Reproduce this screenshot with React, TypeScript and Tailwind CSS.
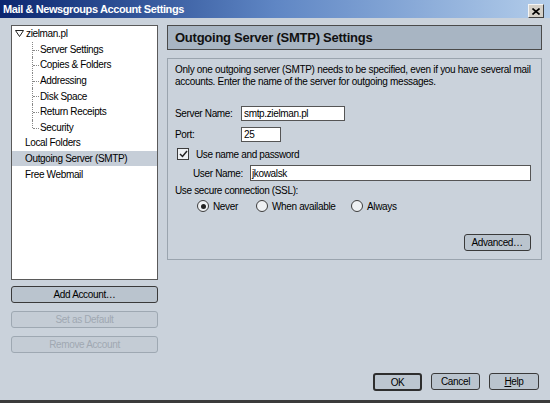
import React from 'react';

const font = { fontFamily: '"Liberation Sans", Arial, sans-serif' };

function TreeItem({ label, indent, selected, last }: { label: string; indent: 'child' | 'root'; selected?: boolean; last?: boolean }) {
  return (
    <div className={`relative h-[15.6px] flex items-center ${selected ? 'bg-[#c6ced8]' : ''}`}>
      {indent === 'child' ? (
        <>
          <span className={`absolute left-[20px] top-0 w-px border-l border-dotted border-[#888] ${last ? 'h-[8px]' : 'h-full'}`} />
          <span className="absolute left-[21px] top-[8px] w-[6px] border-t border-dotted border-[#888]" />
          <span className="pl-[28px]">{label}</span>
        </>
      ) : (
        <span className="pl-[13px]">{label}</span>
      )}
    </div>
  );
}

function Btn({ children, disabled, isDefault, className = '' }: { children: React.ReactNode; disabled?: boolean; isDefault?: boolean; className?: string }) {
  return (
    <div
      className={`h-[17px] flex items-center justify-center rounded-[3px] text-[10px] ${
        disabled
          ? 'border border-[#9ea8b2] bg-[#c4ccd5] text-[#a0a8b2]'
          : isDefault
          ? 'border-2 border-[#2e2e2e] bg-[#bcc6d0] text-black'
          : 'border border-[#3a3a3a] bg-[#bac4ce] text-black'
      } ${className}`}
    >
      {children}
    </div>
  );
}

function Radio({ label, checked }: { label: string; checked?: boolean }) {
  return (
    <div className="flex items-center gap-[4px]">
      <span className="w-[12px] h-[12px] rounded-full border border-[#3c3c3c] bg-[#eef1f4] flex items-center justify-center">
        {checked && <span className="w-[5px] h-[5px] rounded-full bg-[#222]" />}
      </span>
      <span>{label}</span>
    </div>
  );
}

export default function App() {
  return (
    <div className="w-[550px] h-[403px] flex flex-col bg-[#cad2db] text-[10px] tracking-[-0.35px] text-black border-b-[3px] border-[#3b3b3b] overflow-hidden" style={font}>
      {/* Title bar */}
      <div className="h-[18px] shrink-0 flex items-center justify-between pl-[3px] pr-[6px] bg-gradient-to-r from-[#0c2670] via-[#5f86c4] to-[#b3cdea]">
        <span className="text-white font-bold text-[11px] tracking-[-0.4px]">Mail &amp; Newsgroups Account Settings</span>
        <span className="w-[16px] h-[14px] mt-[4px] bg-[#d4d0c8] border border-[#f4f4f4] border-r-[#404040] border-b-[#404040] flex items-center justify-center">
          <svg width="8" height="7" viewBox="0 0 8 7">
            <path d="M0.5 0.5 L7.5 6.5 M7.5 0.5 L0.5 6.5" stroke="#000" strokeWidth="1.6" />
          </svg>
        </span>
      </div>

      <div className="flex-1 flex flex-col pl-[11px] pr-[9px] pt-[7px] pb-[9px]">
        <div className="flex gap-[9px]">
          {/* Left column */}
          <div className="w-[147px] shrink-0 flex flex-col">
            <div className="h-[255px] bg-white border border-[#5a5a5a]">
              <div className="h-[15.6px] flex items-center pl-[3px] gap-[2px]">
                <svg width="9" height="7" viewBox="0 0 9 7">
                  <path d="M0.5 0.5 H8.5 L4.5 6.5 Z" fill="none" stroke="#222" strokeWidth="1" />
                </svg>
                <span>zielman.pl</span>
              </div>
              <TreeItem indent="child" label="Server Settings" />
              <TreeItem indent="child" label="Copies & Folders" />
              <TreeItem indent="child" label="Addressing" />
              <TreeItem indent="child" label="Disk Space" />
              <TreeItem indent="child" label="Return Receipts" />
              <TreeItem indent="child" label="Security" last />
              <TreeItem indent="root" label="Local Folders" />
              <TreeItem indent="root" label="Outgoing Server (SMTP)" selected />
              <TreeItem indent="root" label="Free Webmail" />
            </div>
            <div className="flex flex-col gap-[8px] mt-[6px]">
              <Btn className="bg-[#b3bdc9]">Add Account…</Btn>
              <Btn disabled>Set as Default</Btn>
              <Btn disabled>Remove Account</Btn>
            </div>
          </div>

          {/* Right column */}
          <div className="flex-1 flex flex-col">
            <div className="h-[25px] bg-[#a8b5c3] border border-[#4a4a4a] flex items-center pl-[7px]">
              <span className="font-bold text-[13px] tracking-[-0.25px] text-[#111]">Outgoing Server (SMTP) Settings</span>
            </div>
            <div className="mt-[8px] h-[202px] border border-[#9aa4ae] flex flex-col pl-[7px] pr-[10px] pt-[5px]">
              <p className="leading-[12px] tracking-[-0.3px] whitespace-nowrap">
                Only one outgoing server (SMTP) needs to be specified, even if you have several mail
                <br />
                accounts. Enter the name of the server for outgoing messages.
              </p>
              <div className="flex items-center mt-[18px] h-[15px]">
                <span className="w-[66px]">Server Name:</span>
                <div className="w-[104px] h-[15px] bg-white border border-[#555] pl-[2px] flex items-center">smtp.zielman.pl</div>
              </div>
              <div className="flex items-center mt-[6px] h-[15px]">
                <span className="w-[66px]">Port:</span>
                <div className="w-[40px] h-[15px] bg-white border border-[#555] pl-[2px] flex items-center">25</div>
              </div>
              <div className="flex items-center mt-[5px] h-[14px] pl-[2px] gap-[7px]">
                <span className="w-[12px] h-[12px] border border-[#3c3c3c] bg-[#eef1f4] flex items-center justify-center">
                  <svg width="9" height="8" viewBox="0 0 9 8">
                    <path d="M1 4 L3.5 6.5 L8 1" fill="none" stroke="#222" strokeWidth="1.5" />
                  </svg>
                </span>
                <span>Use name and password</span>
              </div>
              <div className="flex items-center mt-[4px] h-[16px] pl-[18px]">
                <span className="w-[57px]">User Name:</span>
                <div className="flex-1 h-[16px] bg-white border border-[#555] pl-[1px] flex items-center">jkowalsk</div>
              </div>
              <div className="mt-[2px] h-[14px] flex items-center">Use secure connection (SSL):</div>
              <div className="flex items-center mt-[2px] pl-[22px] h-[14px]">
                <div className="w-[59px] shrink-0"><Radio label="Never" checked /></div>
                <div className="w-[95px] shrink-0"><Radio label="When available" /></div>
                <Radio label="Always" />
              </div>
              <div className="flex justify-end mt-[21px]">
                <Btn className="w-[67px]">Advanced…</Btn>
              </div>
            </div>
          </div>
        </div>

        <div className="mt-auto flex justify-end gap-[9px] pr-[2px]">
          <Btn isDefault className="w-[49px] h-[18px]">OK</Btn>
          <Btn className="w-[49px]">Cancel</Btn>
          <Btn className="w-[50px]"><span><span className="underline">H</span>elp</span></Btn>
        </div>
      </div>
    </div>
  );
}
